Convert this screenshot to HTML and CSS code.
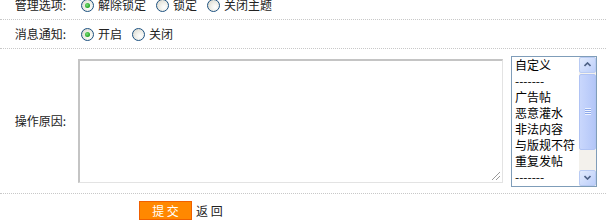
FILE: index.html
```html
<!DOCTYPE html>
<html>
<head>
<meta charset="utf-8">
<link rel="stylesheet" href="styles.css">
</head>
<body>
<div class="form">
  <div class="row row-opt">
    <div class="label">管理选项:</div>
    <div class="field">
      <label class="opt"><span class="radio checked"></span>解除锁定</label>
      <label class="opt"><span class="radio"></span>锁定</label>
      <label class="opt"><span class="radio"></span>关闭主题</label>
    </div>
  </div>
  <div class="row row-opt">
    <div class="label">消息通知:</div>
    <div class="field">
      <label class="opt"><span class="radio checked"></span>开启</label>
      <label class="opt"><span class="radio"></span>关闭</label>
    </div>
  </div>
  <div class="row row-reason">
    <div class="label">操作原因:</div>
    <div class="field field-reason">
      <div class="textarea"><span class="grip"></span></div>
      <div class="select">
        <ul class="options">
          <li>自定义</li>
          <li>-------</li>
          <li>广告帖</li>
          <li>恶意灌水</li>
          <li>非法内容</li>
          <li>与版规不符</li>
          <li>重复发帖</li>
          <li>-------</li>
        </ul>
        <div class="scrollbar">
          <div class="sb-btn"><svg width="7" height="5" viewBox="0 0 7 5"><path d="M0.5 4 L3.5 1 L6.5 4" fill="none" stroke="#4d6185" stroke-width="1.6"/></svg></div>
          <div class="sb-thumb"><span class="sb-grip"></span></div>
          <div class="sb-track"></div>
          <div class="sb-btn"><svg width="7" height="5" viewBox="0 0 7 5"><path d="M0.5 1 L3.5 4 L6.5 1" fill="none" stroke="#4d6185" stroke-width="1.6"/></svg></div>
        </div>
      </div>
    </div>
  </div>
  <div class="row-submit">
    <span class="btn">提 交</span><span class="back">返 回</span>
  </div>
</div>
</body>
</html>
```

FILE: styles.css
```css
html, body {
  margin: 0;
  padding: 0;
  background: #fff;
}
body {
  font-family: "Noto Sans CJK SC", "Liberation Sans", sans-serif;
  font-size: 12px;
  color: #222;
  overflow: hidden;
}
.form {
  margin-top: -9px;
}
.row {
  display: flex;
  align-items: center;
  border-bottom: 1px dotted #c8c8c8;
}
.row-opt {
  height: 28px;
}
.label {
  width: 66px;
  text-align: right;
  flex: none;
  line-height: 16px;
}
.field {
  display: flex;
  align-items: center;
  padding-left: 15px;
}
.opt {
  display: flex;
  align-items: center;
  margin-right: 10px;
  line-height: 16px;
}
.radio {
  width: 11px;
  height: 11px;
  border: 1px solid #1c5180;
  border-radius: 50%;
  background: radial-gradient(circle at 65% 65%, #fff 0, #f0f0ea 40%, #d6d3c8 100%);
  margin-right: 4px;
  position: relative;
  box-sizing: content-box;
}
.radio.checked::after {
  content: "";
  position: absolute;
  left: 3px;
  top: 3px;
  width: 5px;
  height: 5px;
  border-radius: 50%;
  background: radial-gradient(circle at 40% 40%, #7be07b 0, #21a121 70%);
}
.row-reason {
  height: 144px;
}
.field-reason {
  padding-left: 12px;
  align-items: center;
}
.textarea {
  width: 422px;
  height: 121px;
  border-style: solid;
  border-width: 2px 1px 1px 2px;
  border-color: #c4c4c4 #e3e3e3 #e3e3e3 #c4c4c4;
  position: relative;
  background: #fff;
}
.grip {
  position: absolute;
  right: 2px;
  bottom: 2px;
  width: 8px;
  height: 8px;
  background: linear-gradient(135deg, transparent 45%, #999 45%, #999 55%, transparent 55%, transparent 70%, #999 70%, #999 80%, transparent 80%);
}
.select {
  margin-left: 8px;
  width: 84px;
  height: 129px;
  border: 1px solid #7f9db9;
  display: flex;
  background: #fff;
}
.options {
  list-style: none;
  margin: 0;
  padding: 0 0 0 3px;
  flex: 1;
  overflow: hidden;
}
.options li {
  line-height: 16px;
  height: 16px;
  color: #000;
  white-space: nowrap;
  font-size: 12px;
}
.scrollbar {
  width: 17px;
  display: flex;
  flex-direction: column;
  background: #f3f1ec;
}
.sb-btn {
  height: 15px;
  flex: none;
  border: 1px solid #b9cbf3;
  border-radius: 2px;
  background: linear-gradient(135deg, #e2ebfd, #bccefa);
  display: flex;
  align-items: center;
  justify-content: center;
  box-sizing: border-box;
  height: 16px;
}
.sb-thumb {
  height: 76px;
  flex: none;
  margin-top: 1px;
  border: 1px solid #b0c3f4;
  border-radius: 2px;
  background: linear-gradient(90deg, #c9d7fc, #bccdfa 60%, #b3c6f7);
  display: flex;
  align-items: center;
  justify-content: center;
  box-sizing: border-box;
}
.sb-grip {
  width: 6px;
  height: 7px;
  background: repeating-linear-gradient(180deg, #eef3fe 0, #eef3fe 1px, #8ca8ea 1px, #8ca8ea 2px);
}
.sb-track {
  flex: 1;
}
.row-submit {
  display: flex;
  align-items: center;
  padding: 7px 0 0 139px;
}
.btn {
  display: inline-block;
  width: 51px;
  height: 17px;
  line-height: 17px;
  background: #ff8800;
  border: 1px solid #f06000;
  color: #fff;
  text-align: center;
  font-size: 12px;
  box-sizing: content-box;
}
.back {
  margin-left: 4px;
  color: #222;
  line-height: 16px;
}
```
